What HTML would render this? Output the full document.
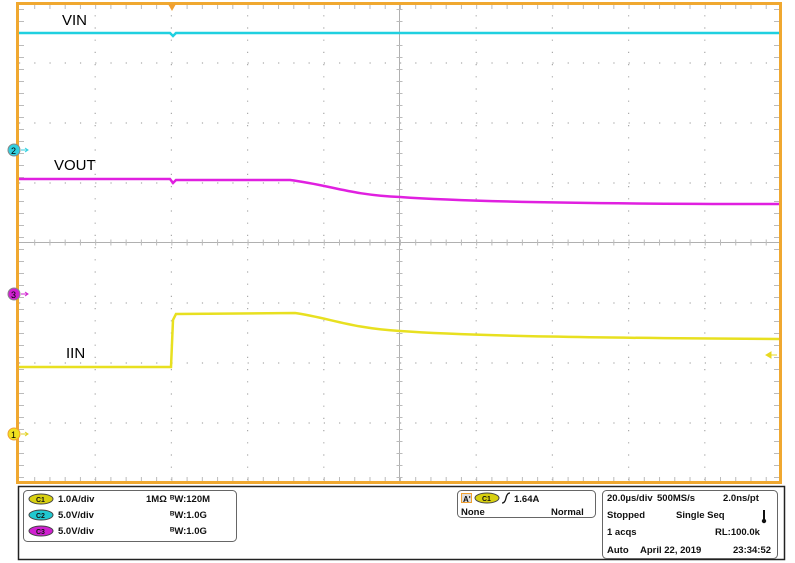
<!DOCTYPE html>
<html><head><style>
body{margin:0;width:795px;height:563px;background:#fff;overflow:hidden;font-family:"Liberation Sans",sans-serif;}
svg{position:absolute;left:0;top:0}
</style></head><body>
<svg width="795" height="563" xmlns="http://www.w3.org/2000/svg" font-family="Liberation Sans, sans-serif">
<rect x="0" y="0" width="795" height="563" fill="#fff"/>
<g stroke="#aaa" stroke-width="1.2" stroke-dasharray="1.2,11">
<line x1="95.2" y1="3" x2="95.2" y2="483"/>
<line x1="171.4" y1="3" x2="171.4" y2="483"/>
<line x1="247.6" y1="3" x2="247.6" y2="483"/>
<line x1="323.8" y1="3" x2="323.8" y2="483"/>
<line x1="476.2" y1="3" x2="476.2" y2="483"/>
<line x1="552.4" y1="3" x2="552.4" y2="483"/>
<line x1="628.6" y1="3" x2="628.6" y2="483"/>
<line x1="704.8" y1="3" x2="704.8" y2="483"/>
</g>
<g stroke="#aaa" stroke-width="1.2" stroke-dasharray="1.2,14.04">
<line x1="19" y1="63" x2="781" y2="63"/>
<line x1="19" y1="123" x2="781" y2="123"/>
<line x1="19" y1="183" x2="781" y2="183"/>
<line x1="19" y1="303" x2="781" y2="303"/>
<line x1="19" y1="363" x2="781" y2="363"/>
<line x1="19" y1="423" x2="781" y2="423"/>
</g>
<g stroke="#b0b0b0" stroke-width="1">
<line x1="399.5" y1="3" x2="399.5" y2="483"/>
<line x1="19" y1="242.5" x2="781" y2="242.5"/>
</g>
<g stroke-dasharray="1,11" stroke="#bbb" stroke-width="6">
<line x1="21" y1="9" x2="21" y2="483"/>
<line x1="777" y1="9" x2="777" y2="483"/>
<line x1="399.5" y1="9" x2="399.5" y2="483"/>
</g>
<g stroke="#bbb" stroke-dasharray="1,14.24" stroke-width="6">
<line x1="34.2" y1="480" x2="781" y2="480"/>
<line x1="34.2" y1="242.5" x2="781" y2="242.5"/>
</g>
<g stroke="#bbb" stroke-dasharray="1,14.24" stroke-width="4">
<line x1="34.2" y1="7" x2="781" y2="7"/>
</g>
<rect x="17.5" y="3.5" width="763" height="479" fill="none" stroke="#f0a830" stroke-width="3"/>
<polygon points="168,4 176,4 172,11" fill="#f0a030"/>
<path d="M19 33 L170 33 L173 36 L176 33 L779 33" fill="none" stroke="#20d0e0" stroke-width="2.5"/>
<path d="M19 179 L170 179 L173 183 L176 180 L290 180 C330 185 350 195 400 197 C470 202 600 204 779 204" fill="none" stroke="#e020e0" stroke-width="2.5"/>
<path d="M19 367 L171 367 L173 320 L176 314 L295 313 C330 318 350 328 400 331 C470 336 600 338 779 339" fill="none" stroke="#e8e020" stroke-width="2.5"/>
<text x="62" y="25" font-size="15">VIN</text>
<text x="54" y="170" font-size="15">VOUT</text>
<text x="66" y="358" font-size="15">IIN</text>
<circle cx="14" cy="150" r="6" fill="#30d0e0" stroke="#888"/><text x="11" y="154" font-size="9">2</text>
<path d="M21 150h6M25 148l3 2-3 2" stroke="#30d0e0" fill="none"/>
<circle cx="14" cy="294" r="6" fill="#d020d0" stroke="#888"/><text x="11" y="298" font-size="9">3</text>
<path d="M21 294h6M25 292l3 2-3 2" stroke="#d020d0" fill="none"/>
<circle cx="14" cy="434" r="6" fill="#f0e020" stroke="#f0a030"/><text x="11" y="438" font-size="9">1</text>
<path d="M21 434h6M25 432l3 2-3 2" stroke="#e0d020" fill="none"/>
<path d="M766 355l5-3v6zM770 355h7" stroke="#e8d820" fill="#e8d820"/>
<rect x="18.5" y="486.5" width="766" height="73" fill="#fff" stroke="#222" stroke-width="1.5"/>
<rect x="23.5" y="490.5" width="213" height="51" rx="4" fill="none" stroke="#666"/>
<rect x="457.5" y="490.5" width="138" height="27" rx="4" fill="none" stroke="#666"/>
<rect x="602.5" y="490.5" width="175" height="68" rx="4" fill="none" stroke="#666"/>
<g font-size="9.5" font-weight="bold" fill="#111">
<ellipse cx="41" cy="499" rx="12" ry="5" fill="#d8d010" stroke="#444"/><text x="36" y="502" font-size="7">C1</text>
<ellipse cx="41" cy="515" rx="12" ry="5" fill="#20c8d0" stroke="#444"/><text x="36" y="518" font-size="7">C2</text>
<ellipse cx="41" cy="531" rx="12" ry="5" fill="#d020d0" stroke="#444"/><text x="36" y="534" font-size="7">C3</text>
<text x="58" y="502">1.0A/div</text>
<text x="58" y="518">5.0V/div</text>
<text x="58" y="534">5.0V/div</text>
<text x="146" y="502">1MΩ</text>
<text x="170" y="502">ᴮW:120M</text>
<text x="170" y="518">ᴮW:1.0G</text>
<text x="170" y="534">ᴮW:1.0G</text>
<rect x="461.5" y="493.5" width="10" height="9" fill="#ddd" stroke="#f0a030"/><text x="463" y="502" font-size="8">A'</text>
<ellipse cx="487" cy="498" rx="12" ry="5" fill="#d8d010" stroke="#444"/><text x="482" y="501" font-size="7">C1</text>
<path d="M502 503q3 0 4-5t4-5" fill="none" stroke="#111" stroke-width="1.3"/>
<text x="514" y="502">1.64A</text>
<text x="461" y="515">None</text>
<text x="551" y="515">Normal</text>
<text x="607" y="501">20.0µs/div</text><text x="657" y="501">500MS/s</text><text x="723" y="501">2.0ns/pt</text>
<text x="607" y="518">Stopped</text><text x="676" y="518">Single Seq</text>
<rect x="763" y="510" width="2" height="10" fill="#111"/><circle cx="764" cy="521" r="2.2" fill="#111"/>
<text x="607" y="535">1 acqs</text><text x="715" y="535">RL:100.0k</text>
<text x="607" y="553">Auto</text><text x="640" y="553">April 22, 2019</text><text x="733" y="553">23:34:52</text>
</g>
</svg>
</body></html>
